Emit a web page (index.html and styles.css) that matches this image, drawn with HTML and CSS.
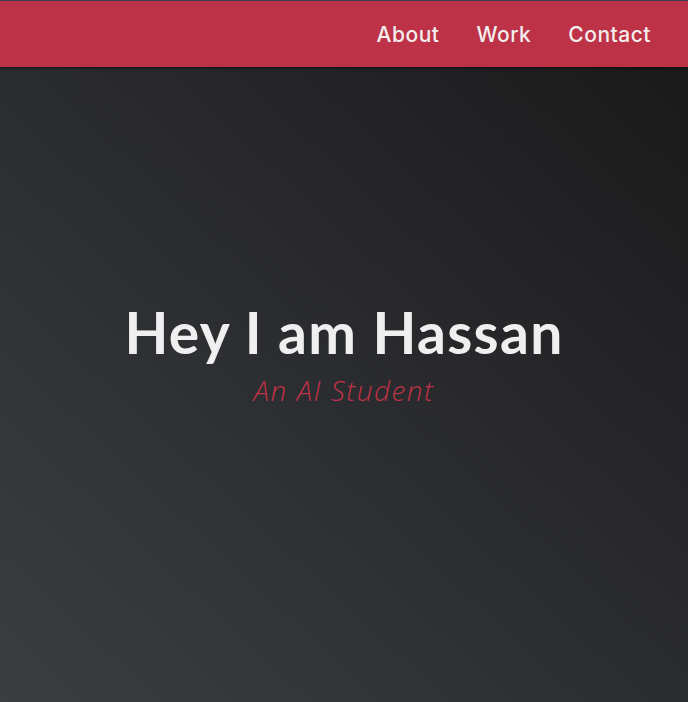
FILE: index.html
```html
<!DOCTYPE html>
<html lang="en">
<head>
<meta charset="utf-8">
<title>Hassan</title>
<link rel="stylesheet" href="styles.css">
</head>
<body>
<header class="navbar">
  <nav class="nav-links">
    <a href="#about" class="nav-link">About</a>
    <a href="#work" class="nav-link">Work</a>
    <a href="#contact" class="nav-link">Contact</a>
  </nav>
</header>
<main class="hero">
  <h1 class="hero-title">Hey I am Hassan</h1>
  <p class="hero-subtitle">An AI Student</p>
</main>
</body>
</html>
```
FILE: styles.css
```css
* { box-sizing: border-box; }
html, body { margin: 0; padding: 0; height: 100%; }
body {
  font-family: "Open Sans", "Liberation Sans", sans-serif;
  background: #202123;
  overflow: hidden;
}
.navbar {
  position: relative;
  z-index: 2;
  height: 67px;
  border-top: 1px solid #3b4056;
  background: #be3247;
  display: flex;
  justify-content: flex-end;
  align-items: center;
  padding-right: 37px;
  box-shadow: 0 1px 3px rgba(0,0,0,0.6);
}
.nav-links {
  display: flex;
  gap: 37px;
}
.nav-link {
  color: #f2eeee;
  text-decoration: none;
  font-family: "Inter", "Open Sans", sans-serif;
  font-size: 21px;
  font-weight: 500;
  letter-spacing: 0.5px;
}
.hero {
  height: 635px;
  background: linear-gradient(to top right, #3b3e41 0%, #2b2c2f 50%, #1a1a1b 100%);
  display: flex;
  flex-direction: column;
  align-items: center;
  justify-content: center;
  padding-bottom: 61px;
}
.hero-title {
  margin: 0;
  color: #efefef;
  font-family: "Lato", "Open Sans", sans-serif;
  font-weight: 700;
  font-size: 57px;
  line-height: 64px;
  letter-spacing: 1.3px;
}
.hero-subtitle {
  margin: 8px 0 0;
  color: #bf3247;
  font-family: "Open Sans", sans-serif;
  font-style: italic;
  font-weight: 300;
  font-size: 28px;
  line-height: 36px;
  letter-spacing: 1.5px;
}
```
